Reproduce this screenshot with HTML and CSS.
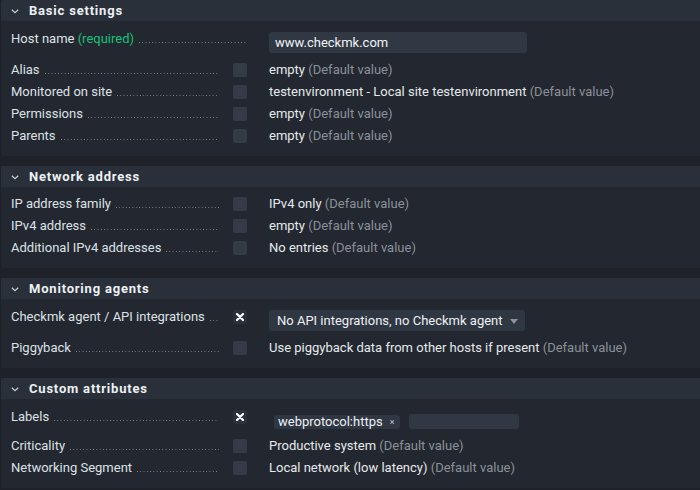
FILE: index.html
```html
<!DOCTYPE html>
<html>
<head>
<meta charset="utf-8">
<link rel="stylesheet" href="styles.css">
</head>
<body>
<div class="page">
  <section class="sec">
    <div class="hdr"><svg class="chev" width="8" height="5" viewBox="0 0 8 5"><path d="M0.8 0.8 L4 3.8 L7.2 0.8" fill="none" stroke="#c9cdd3" stroke-width="1.2"/></svg><span>Basic settings</span></div>
    <div class="body">
      <div class="row tall">
        <div class="lbl wide"><span class="t">Host name <span class="req">(required)</span></span><span class="dots"></span></div>
        <div class="val gap20"><div class="input">www.checkmk.com</div></div>
      </div>
      <div class="row"><div class="lbl"><span class="t">Alias</span><span class="dots"></span></div><div class="cb"></div><div class="val">empty <span class="def">(Default value)</span></div></div>
      <div class="row"><div class="lbl"><span class="t">Monitored on site</span><span class="dots"></span></div><div class="cb"></div><div class="val">testenvironment - Local site testenvironment <span class="def">(Default value)</span></div></div>
      <div class="row"><div class="lbl"><span class="t">Permissions</span><span class="dots"></span></div><div class="cb"></div><div class="val">empty <span class="def">(Default value)</span></div></div>
      <div class="row"><div class="lbl"><span class="t">Parents</span><span class="dots"></span></div><div class="cb"></div><div class="val">empty <span class="def">(Default value)</span></div></div>
    </div>
  </section>

  <section class="sec">
    <div class="hdr"><svg class="chev" width="8" height="5" viewBox="0 0 8 5"><path d="M0.8 0.8 L4 3.8 L7.2 0.8" fill="none" stroke="#c9cdd3" stroke-width="1.2"/></svg><span>Network address</span></div>
    <div class="body">
      <div class="row"><div class="lbl"><span class="t">IP address family</span><span class="dots"></span></div><div class="cb"></div><div class="val">IPv4 only <span class="def">(Default value)</span></div></div>
      <div class="row"><div class="lbl"><span class="t">IPv4 address</span><span class="dots"></span></div><div class="cb"></div><div class="val">empty <span class="def">(Default value)</span></div></div>
      <div class="row"><div class="lbl"><span class="t">Additional IPv4 addresses</span><span class="dots"></span></div><div class="cb"></div><div class="val">No entries <span class="def">(Default value)</span></div></div>
    </div>
  </section>

  <section class="sec">
    <div class="hdr"><svg class="chev" width="8" height="5" viewBox="0 0 8 5"><path d="M0.8 0.8 L4 3.8 L7.2 0.8" fill="none" stroke="#c9cdd3" stroke-width="1.2"/></svg><span>Monitoring agents</span></div>
    <div class="body">
      <div class="row tall"><div class="lbl"><span class="t">Checkmk agent / API integrations</span><span class="dots"></span></div><div class="cb on"><svg width="8" height="8" viewBox="0 0 8 8"><path d="M1 1 L7 7 M7 1 L1 7" stroke="#ffffff" stroke-width="2.2" stroke-linecap="round"/></svg></div><div class="val"><div class="select">No API integrations, no Checkmk agent<span class="arrow"></span></div></div></div>
      <div class="row"><div class="lbl"><span class="t">Piggyback</span><span class="dots"></span></div><div class="cb"></div><div class="val">Use piggyback data from other hosts if present <span class="def">(Default value)</span></div></div>
    </div>
  </section>

  <section class="sec">
    <div class="hdr"><svg class="chev" width="8" height="5" viewBox="0 0 8 5"><path d="M0.8 0.8 L4 3.8 L7.2 0.8" fill="none" stroke="#c9cdd3" stroke-width="1.2"/></svg><span>Custom attributes</span></div>
    <div class="body">
      <div class="row labels"><div class="lbl"><span class="t">Labels</span><span class="dots"></span></div><div class="cb on"><svg width="8" height="8" viewBox="0 0 8 8"><path d="M1 1 L7 7 M7 1 L1 7" stroke="#ffffff" stroke-width="2.2" stroke-linecap="round"/></svg></div><div class="val"><div class="tags"><span class="tag">webprotocol:https<span class="x">×</span></span><span class="taginput"></span></div></div></div>
      <div class="row"><div class="lbl"><span class="t">Criticality</span><span class="dots"></span></div><div class="cb"></div><div class="val">Productive system <span class="def">(Default value)</span></div></div>
      <div class="row"><div class="lbl"><span class="t">Networking Segment</span><span class="dots"></span></div><div class="cb"></div><div class="val">Local network (low latency) <span class="def">(Default value)</span></div></div>
    </div>
  </section>
</div>
</body>
</html>
```

FILE: styles.css
```css
html, body {
  margin: 0;
  padding: 0;
  background: #1e2228;
}
body {
  font-family: Roboto, "Liberation Sans", sans-serif;
  font-size: 13px;
  color: #e3e6ea;
  overflow: hidden;
}
.page {
  display: flex;
  flex-direction: column;
  gap: 10px;
  padding-left: 1px;
}
.sec {
  background: #232830;
  border-radius: 2px 0 0 2px;
}
.hdr {
  height: 21px;
  background: #29303a;
  display: flex;
  align-items: center;
  padding-left: 10px;
  font-weight: bold;
  letter-spacing: 0.8px;
  color: #eef0f3;
  border-radius: 2px 0 0 0;
}
.chev {
  margin-right: 10px;
  margin-top: 1px;
}
.body {
  padding: 6px 0 9px 10px;
}
.row {
  display: flex;
  align-items: flex-start;
  height: 22px;
}
.row.tall {
  height: 32px;
}
.row.labels {
  height: 30px;
}
.lbl {
  width: 210px;
  height: 22px;
  display: flex;
  line-height: 22px;
  white-space: nowrap;
  color: #dde1e6;
}
.row.tall .lbl, .row.labels .lbl {
  margin-top: 1px;
}
.lbl.wide {
  width: 238px;
}
.t {
  flex: none;
  padding-right: 5px;
}
.req {
  color: #15c27a;
}
.dots {
  flex: 1;
  height: 22px;
  margin-right: 2px;
  background-image: linear-gradient(to right, #858b94 1px, transparent 1px);
  background-size: 3.3px 1px;
  background-repeat: repeat-x;
  background-position: 0 14px;
}
.cb {
  flex: none;
  width: 14px;
  height: 14px;
  margin: 4px 0 0 12px;
  background: #343b46;
  border-radius: 2px;
  display: flex;
  align-items: center;
  justify-content: center;
}
.row.tall .cb, .row.labels .cb {
  margin-top: 5px;
}
.cb.on {
  background: #2b323c;
}
.val {
  margin-left: 22px;
  line-height: 22px;
  white-space: nowrap;
  color: #e6e8eb;
}
.val.gap20 {
  margin-left: 20px;
}
.def {
  color: #8b9098;
}
.input {
  margin-top: 5px;
  width: 252px;
  height: 21px;
  line-height: 21px;
  padding-left: 6px;
  background: #303844;
  border-radius: 3px;
  color: #f2f4f6;
}
.select {
  margin-top: 5px;
  width: 248px;
  height: 21px;
  line-height: 21px;
  padding-left: 8px;
  background: #2f3743;
  border-radius: 3px;
  display: flex;
  align-items: center;
  color: #eef0f3;
}
.arrow {
  margin-left: 7px;
  width: 0;
  height: 0;
  border-left: 4px solid transparent;
  border-right: 4px solid transparent;
  border-top: 5px solid #8c919a;
  margin-top: 2px;
}
.tags {
  display: flex;
  align-items: center;
  margin: 9px 0 0 5px;
  gap: 9px;
}
.tag {
  display: flex;
  align-items: center;
  height: 14px;
  line-height: 14px;
  padding: 0 5px 0 4px;
  background: #2f3743;
  border-radius: 3px;
  color: #eef0f3;
}
.x {
  font-size: 9px;
  margin-left: 7px;
  color: #c4c9d0;
}
.taginput {
  width: 110px;
  height: 15px;
  background: #303844;
  border-radius: 3px;
}
```
